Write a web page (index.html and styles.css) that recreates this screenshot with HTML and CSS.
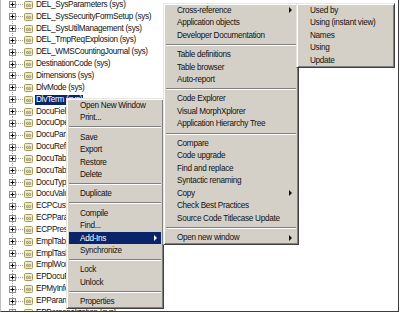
FILE: index.html
```html
<!DOCTYPE html>
<html lang="en">
<head>
    <meta charset="UTF-8">
    <title>AOT - Tables</title>
    <link rel="stylesheet" href="styles.css">
</head>
<body>
    <svg class="defs" width="0" height="0">
        <symbol id="expander" viewBox="0 0 7 7">
            <rect x="0.5" y="0.5" width="6" height="6" fill="#fff" stroke="#8c8c8c"/>
            <path d="M1.5 3.5h4M3.5 1.5v4" stroke="#000"/>
        </symbol>
        <symbol id="table-icon" viewBox="0 0 9 8">
            <rect x="0.5" y="0.5" width="8" height="7" rx="1" fill="#eeebc8" stroke="#a69b5a"/>
            <path d="M2 5.5h5" stroke="#c9c29a"/>
            <circle cx="3.3" cy="4.3" r="1" fill="none" stroke="#8d8a7a" stroke-width="0.8"/>
            <circle cx="5.7" cy="4.3" r="1" fill="none" stroke="#8d8a7a" stroke-width="0.8"/>
        </symbol>
    </svg>

    <div class="frame">
        <!-- AOT tree: Data Dictionary > Tables -->
        <ul class="tree">
            <li class="node"><span class="twig"><svg class="expander"><use href="#expander"/></svg></span><span class="branch"></span><svg class="ico"><use href="#table-icon"/></svg><span class="label">DEL_SysParameters (sys)</span></li>
            <li class="node"><span class="twig"><svg class="expander"><use href="#expander"/></svg></span><span class="branch"></span><svg class="ico"><use href="#table-icon"/></svg><span class="label">DEL_SysSecurityFormSetup (sys)</span></li>
            <li class="node"><span class="twig"><svg class="expander"><use href="#expander"/></svg></span><span class="branch"></span><svg class="ico"><use href="#table-icon"/></svg><span class="label">DEL_SysUtilManagement (sys)</span></li>
            <li class="node"><span class="twig"><svg class="expander"><use href="#expander"/></svg></span><span class="branch"></span><svg class="ico"><use href="#table-icon"/></svg><span class="label">DEL_TmpReqExplosion (sys)</span></li>
            <li class="node"><span class="twig"><svg class="expander"><use href="#expander"/></svg></span><span class="branch"></span><svg class="ico"><use href="#table-icon"/></svg><span class="label">DEL_WMSCountingJournal (sys)</span></li>
            <li class="node"><span class="twig"><svg class="expander"><use href="#expander"/></svg></span><span class="branch"></span><svg class="ico"><use href="#table-icon"/></svg><span class="label">DestinationCode (sys)</span></li>
            <li class="node"><span class="twig"><svg class="expander"><use href="#expander"/></svg></span><span class="branch"></span><svg class="ico"><use href="#table-icon"/></svg><span class="label">Dimensions (sys)</span></li>
            <li class="node"><span class="twig"><svg class="expander"><use href="#expander"/></svg></span><span class="branch"></span><svg class="ico"><use href="#table-icon"/></svg><span class="label">DlvMode (sys)</span></li>
            <li class="node selected"><span class="twig"><svg class="expander"><use href="#expander"/></svg></span><span class="branch"></span><svg class="ico"><use href="#table-icon"/></svg><span class="label">DlvTerm (sys)</span></li>
            <li class="node"><span class="twig"><svg class="expander"><use href="#expander"/></svg></span><span class="branch"></span><svg class="ico"><use href="#table-icon"/></svg><span class="label">DocuField (sys)</span></li>
            <li class="node"><span class="twig"><svg class="expander"><use href="#expander"/></svg></span><span class="branch"></span><svg class="ico"><use href="#table-icon"/></svg><span class="label">DocuOpenFile (sys)</span></li>
            <li class="node"><span class="twig"><svg class="expander"><use href="#expander"/></svg></span><span class="branch"></span><svg class="ico"><use href="#table-icon"/></svg><span class="label">DocuParameters (sys)</span></li>
            <li class="node"><span class="twig"><svg class="expander"><use href="#expander"/></svg></span><span class="branch"></span><svg class="ico"><use href="#table-icon"/></svg><span class="label">DocuRef (sys)</span></li>
            <li class="node"><span class="twig"><svg class="expander"><use href="#expander"/></svg></span><span class="branch"></span><svg class="ico"><use href="#table-icon"/></svg><span class="label">DocuTable (sys)</span></li>
            <li class="node"><span class="twig"><svg class="expander"><use href="#expander"/></svg></span><span class="branch"></span><svg class="ico"><use href="#table-icon"/></svg><span class="label">DocuTableFields (sys)</span></li>
            <li class="node"><span class="twig"><svg class="expander"><use href="#expander"/></svg></span><span class="branch"></span><svg class="ico"><use href="#table-icon"/></svg><span class="label">DocuType (sys)</span></li>
            <li class="node"><span class="twig"><svg class="expander"><use href="#expander"/></svg></span><span class="branch"></span><svg class="ico"><use href="#table-icon"/></svg><span class="label">DocuValue (sys)</span></li>
            <li class="node"><span class="twig"><svg class="expander"><use href="#expander"/></svg></span><span class="branch"></span><svg class="ico"><use href="#table-icon"/></svg><span class="label">ECPCustSignUp (sys)</span></li>
            <li class="node"><span class="twig"><svg class="expander"><use href="#expander"/></svg></span><span class="branch"></span><svg class="ico"><use href="#table-icon"/></svg><span class="label">ECPParameters (sys)</span></li>
            <li class="node"><span class="twig"><svg class="expander"><use href="#expander"/></svg></span><span class="branch"></span><svg class="ico"><use href="#table-icon"/></svg><span class="label">ECPPresentation (sys)</span></li>
            <li class="node"><span class="twig"><svg class="expander"><use href="#expander"/></svg></span><span class="branch"></span><svg class="ico"><use href="#table-icon"/></svg><span class="label">EmplTable (sys)</span></li>
            <li class="node"><span class="twig"><svg class="expander"><use href="#expander"/></svg></span><span class="branch"></span><svg class="ico"><use href="#table-icon"/></svg><span class="label">EmplTask (sys)</span></li>
            <li class="node"><span class="twig"><svg class="expander"><use href="#expander"/></svg></span><span class="branch"></span><svg class="ico"><use href="#table-icon"/></svg><span class="label">EmplWorkCalendar (sys)</span></li>
            <li class="node"><span class="twig"><svg class="expander"><use href="#expander"/></svg></span><span class="branch"></span><svg class="ico"><use href="#table-icon"/></svg><span class="label">EPDocuParameters (sys)</span></li>
            <li class="node"><span class="twig"><svg class="expander"><use href="#expander"/></svg></span><span class="branch"></span><svg class="ico"><use href="#table-icon"/></svg><span class="label">EPMyInfo (sys)</span></li>
            <li class="node"><span class="twig"><svg class="expander"><use href="#expander"/></svg></span><span class="branch"></span><svg class="ico"><use href="#table-icon"/></svg><span class="label">EPParameters (sys)</span></li>
            <li class="node"><span class="twig"><svg class="expander"><use href="#expander"/></svg></span><span class="branch"></span><svg class="ico"><use href="#table-icon"/></svg><span class="label">EPPersonalization (sys)</span></li>
        </ul>

        <!-- Context menu on the selected table -->
        <div class="menu menu-main">
            <div class="item">Open New Window</div>
            <div class="item">Print...</div>
            <div class="sep"></div>
            <div class="item">Save</div>
            <div class="item">Export</div>
            <div class="item">Restore</div>
            <div class="item">Delete</div>
            <div class="sep"></div>
            <div class="item">Duplicate</div>
            <div class="sep"></div>
            <div class="item">Compile</div>
            <div class="item">Find...</div>
            <div class="item sub active">Add-Ins</div>
            <div class="item">Synchronize</div>
            <div class="sep"></div>
            <div class="item">Lock</div>
            <div class="item">Unlock</div>
            <div class="sep"></div>
            <div class="item">Properties</div>
        </div>

        <!-- Add-Ins submenu -->
        <div class="menu menu-addins">
            <div class="item sub">Cross-reference</div>
            <div class="item">Application objects</div>
            <div class="item">Developer Documentation</div>
            <div class="sep"></div>
            <div class="item">Table definitions</div>
            <div class="item">Table browser</div>
            <div class="item">Auto-report</div>
            <div class="sep"></div>
            <div class="item">Code Explorer</div>
            <div class="item">Visual MorphXplorer</div>
            <div class="item">Application Hierarchy Tree</div>
            <div class="sep"></div>
            <div class="item">Compare</div>
            <div class="item">Code upgrade</div>
            <div class="item">Find and replace</div>
            <div class="item">Syntactic renaming</div>
            <div class="item sub">Copy</div>
            <div class="item">Check Best Practices</div>
            <div class="item">Source Code Titlecase Update</div>
            <div class="sep"></div>
            <div class="item sub">Open new window</div>
        </div>

        <!-- Cross-reference submenu -->
        <div class="menu menu-xref">
            <div class="item">Used by</div>
            <div class="item">Using (instant view)</div>
            <div class="item">Names</div>
            <div class="item">Using</div>
            <div class="item">Update</div>
        </div>
    </div>
</body>
</html>
```

FILE: styles.css
```css
body {
    margin: 0;
    background-color: #fff;
    font-family: 'Liberation Sans', Tahoma, sans-serif;
    font-size: 8.2px;
    letter-spacing: -0.3px;
    color: #111;
}

.defs {
    position: absolute;
    width: 0;
    height: 0;
}

.frame {
    position: relative;
    width: 397px;
    height: 311px;
    border-left: 1px solid #bdbdbd;
    border-right: 1px solid #3c3c3c;
    border-bottom: 1px solid #3c3c3c;
    overflow: hidden;
}

/* tree */
.tree {
    list-style: none;
    margin: -1px 0 0;
    padding: 0 0 0 8px;
}

.node {
    display: flex;
    align-items: center;
    height: 11.85px;
    white-space: nowrap;
}

.twig {
    align-self: stretch;
    display: flex;
    align-items: center;
    width: 7px;
    background: repeating-linear-gradient(to bottom, #9a9a9a 0 1px, transparent 1px 2px) 3px 0 / 1px 100% no-repeat;
}

.expander {
    display: block;
    width: 7px;
    height: 7px;
}

.branch {
    width: 8px;
    height: 1px;
    background: repeating-linear-gradient(to right, #9a9a9a 0 1px, transparent 1px 2px);
}

.ico {
    width: 9px;
    height: 8px;
}

.label {
    margin-left: 2px;
    padding: 0 1px;
    line-height: 10px;
}

.node.selected .label {
    background-color: #0a246a;
    color: #fff;
}

/* popup menus */
.menu {
    position: absolute;
    box-sizing: border-box;
    padding: 0 2px;
    background-color: #d4d0c8;
    border: 1px solid;
    border-color: #e8e6e0 #404040 #404040 #e8e6e0;
    box-shadow: inset 1px 1px #fff, inset -1px -1px #808080;
}

.menu-main {
    left: 65px;
    top: 98px;
    width: 98px;
}

.menu-addins {
    left: 162px;
    top: 3px;
    width: 136px;
}

.menu-xref {
    left: 295px;
    top: 3px;
    width: 99px;
}

.item {
    display: flex;
    align-items: center;
    justify-content: space-between;
    height: 12.55px;
    padding: 0 4px 0 11px;
    white-space: nowrap;
}

.item.sub::after {
    content: '';
    border-left: 3px solid currentColor;
    border-top: 3px solid transparent;
    border-bottom: 3px solid transparent;
}

.item.active {
    background-color: #0a246a;
    color: #fff;
}

.sep {
    display: flex;
    align-items: center;
    height: 6.65px;
}

.sep::before {
    content: '';
    flex: 1;
    border-top: 1px solid #808080;
    border-bottom: 1px solid #fff;
}
```
